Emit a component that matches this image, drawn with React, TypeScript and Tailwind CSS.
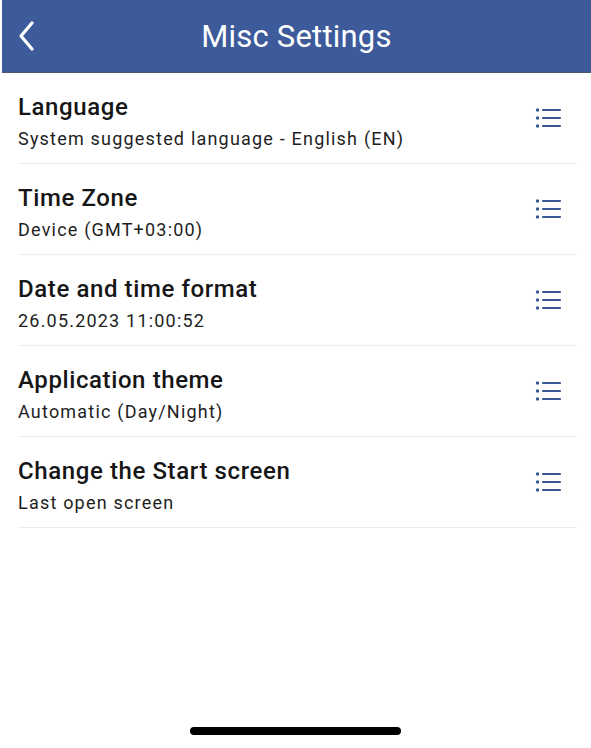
import type { FC } from 'react';

const rows = [
  { title: 'Language', value: 'System suggested language - English (EN)' },
  { title: 'Time Zone', value: 'Device (GMT+03:00)' },
  { title: 'Date and time format', value: '26.05.2023 11:00:52' },
  { title: 'Application theme', value: 'Automatic (Day/Night)' },
  { title: 'Change the Start screen', value: 'Last open screen' },
];

const ListIcon: FC = () => (
  <svg width="28" height="24" viewBox="0 0 28 24" className="text-[#3a5796]">
    <circle cx="2.5" cy="4" r="1.7" fill="currentColor" />
    <circle cx="2.5" cy="12" r="1.7" fill="currentColor" />
    <circle cx="2.5" cy="20" r="1.7" fill="currentColor" />
    <rect x="7" y="2.9" width="19" height="2.2" rx="0.8" fill="currentColor" />
    <rect x="7" y="10.9" width="19" height="2.2" rx="0.8" fill="currentColor" />
    <rect x="7" y="18.9" width="19" height="2.2" rx="0.8" fill="currentColor" />
  </svg>
);

const App: FC = () => {
  return (
    <div
      className="flex h-[748px] w-full flex-col bg-white"
      style={{ fontFamily: 'Roboto, "Noto Sans", sans-serif' }}
    >
      {/* barra superior */}
      <header className="ml-[2px] flex h-[73px] items-center border-b border-[#4a5570] bg-[#3d5a9b]">
        <button className="flex h-full w-[46px] items-center justify-center pl-[4px] text-white">
          <svg width="18" height="32" viewBox="0 0 18 32">
            <path
              d="M14 3 L3 16 L14 29"
              fill="none"
              stroke="currentColor"
              strokeWidth="3.2"
              strokeLinecap="round"
              strokeLinejoin="round"
            />
          </svg>
        </button>
        <h1 className="flex-1 pr-[46px] text-center text-[31px] leading-none tracking-[0.2px] text-white">
          Misc Settings
        </h1>
      </header>

      <ul className="flex-1">
        {rows.map(row => (
          <li key={row.title} className="ml-[18px] mr-[14px] flex items-center border-b border-[#ececec]">
            <div className="flex-1 pt-[19px] pb-[13px]">
              <div className="text-[24px] font-medium leading-[30px] tracking-[0.6px] text-[#161616]">
                {row.title}
              </div>
              <div className="mt-[6px] text-[18px] leading-[22px] tracking-[1.2px] text-[#1e1e1e]">
                {row.value}
              </div>
            </div>
            <div className="pr-[14px]">
              <ListIcon />
            </div>
          </li>
        ))}
      </ul>

      <div className="flex justify-center pb-[13px]">
        <div className="h-[8px] w-[211px] rounded-full bg-black" />
      </div>
    </div>
  );
};

export default App;
